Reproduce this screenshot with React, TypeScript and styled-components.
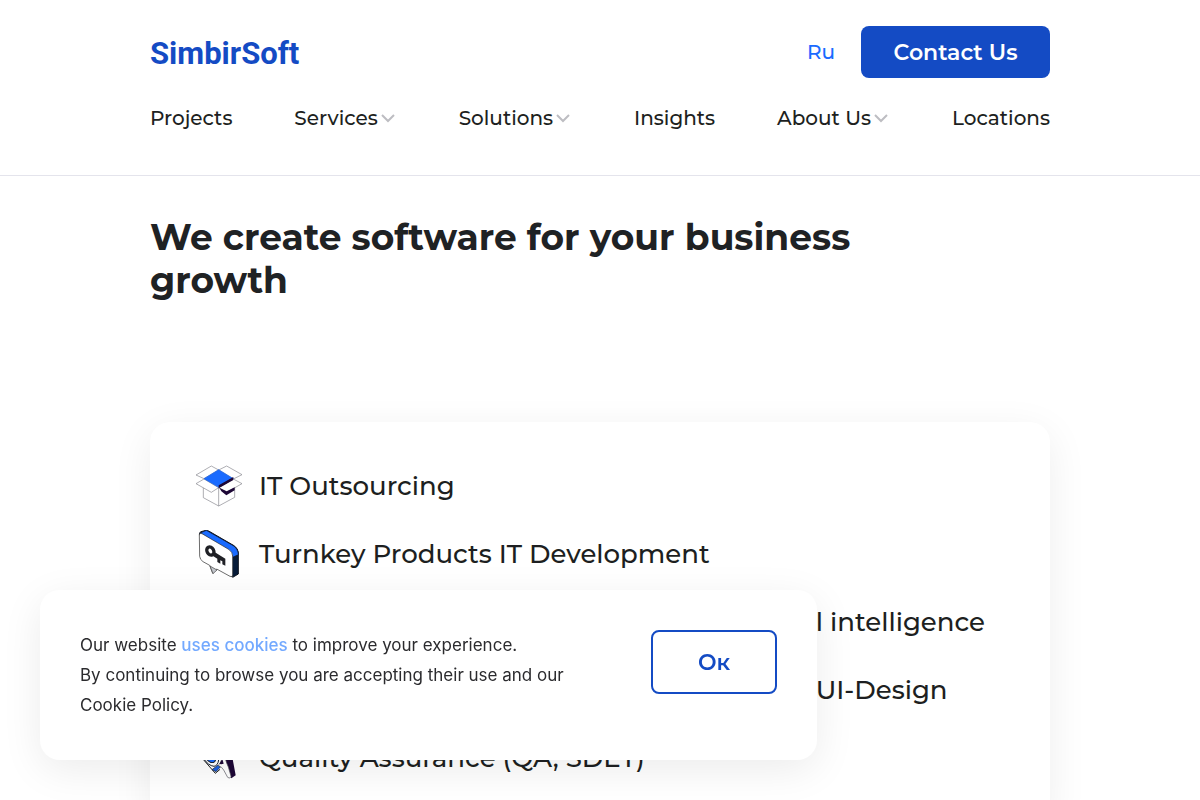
import React from 'react';
import styled, { createGlobalStyle } from 'styled-components';

const GlobalStyle = createGlobalStyle`
  *, *::before, *::after { box-sizing: border-box; }
  body {
    margin: 0;
    background: #fff;
    color: #1d1f21;
    font-family: Montserrat, Inter, "Open Sans", sans-serif;
    font-weight: 500;
  }
  a { color: inherit; text-decoration: none; }
`;

const Header = styled.header`
  padding: 26px 0 40px;
  border-bottom: 1px solid #e4e4ec;
`;

const Container = styled.div`
  width: 75%;
  margin: 0 auto;
`;

const TopBar = styled.div`
  display: flex;
  align-items: center;
  justify-content: space-between;
`;

const Logo = styled.a`
  padding-top: 4px;
  font-family: Roboto, sans-serif;
  font-size: 31px;
  line-height: 48px;
  font-weight: 700;
  color: #144bc4;
`;

const Actions = styled.div`
  display: flex;
  align-items: center;
  gap: 26px;
`;

const Language = styled.a`
  font-size: 20px;
  color: #1a6bff;
`;

const Button = styled.button<{ $outlined?: boolean }>`
  height: ${(p) => (p.$outlined ? 64 : 52)}px;
  min-width: ${(p) => (p.$outlined ? 126 : 189)}px;
  padding: 0 32px;
  border: ${(p) => (p.$outlined ? '2px solid #144bc4' : '0')};
  border-radius: 8px;
  background: ${(p) => (p.$outlined ? '#fff' : '#144bc4')};
  color: ${(p) => (p.$outlined ? '#144bc4' : '#fff')};
  font-family: inherit;
  font-size: 22px;
  font-weight: 600;
  white-space: nowrap;
  cursor: pointer;
`;

const Nav = styled.nav`
  display: flex;
  justify-content: space-between;
  margin-top: 24px;
`;

const NavLink = styled.a`
  display: flex;
  align-items: center;
  gap: 3px;
  font-size: 20px;
  line-height: 33px;
`;

const Title = styled.h1`
  max-width: 760px;
  margin: 40px 0 120px;
  font-size: 36px;
  line-height: 43px;
  font-weight: 700;
  color: #1f2224;
`;

const Card = styled.ul`
  display: flex;
  flex-direction: column;
  gap: 20px;
  margin: 0 0 60px;
  padding: 40px 45px;
  list-style: none;
  border-radius: 20px;
  background: #fff;
  box-shadow: 0 10px 40px rgba(0, 0, 0, 0.07);
`;

const Service = styled.a`
  display: flex;
  align-items: center;
  gap: 16px;
  font-size: 26px;
  line-height: 48px;
  white-space: nowrap;
  svg { flex: none; }
`;

const CookieBanner = styled.aside`
  position: fixed;
  left: 40px;
  bottom: 40px;
  display: flex;
  align-items: flex-start;
  justify-content: space-between;
  width: calc(100% - 80px);
  max-width: 777px;
  padding: 40px;
  border-radius: 20px;
  background: #fff;
  box-shadow: 0 10px 40px rgba(0, 0, 0, 0.08);
`;

const CookieText = styled.p`
  max-width: 510px;
  margin: 0;
  font-family: Inter, Roboto, sans-serif;
  font-size: 17px;
  font-weight: 400;
  line-height: 30px;
  color: #2b2b2e;
  a { color: #73a9ff; font-weight: 500; }
`;

const Chevron = () => (
  <svg width="16" height="16" viewBox="0 0 16 16" fill="none" stroke="#bdbdc2" strokeWidth="2" aria-hidden="true">
    <path d="M1 4l6 6 6-6" />
  </svg>
);

const BoxIcon = () => (
  <svg width="48" height="48" viewBox="15 21 144 144" fill="#fff" stroke="#85858c" strokeWidth="2" strokeLinejoin="round" aria-hidden="true">
    <path d="M40 84v44l46 25 48-26V84L86 58z" />
    <path d="M86 98v55" />
    <path d="M18 60l46-27 22 12-44 26zM86 45l24-12 46 26-26 13z" />
    <path d="M18 86l24-14 44 26-22 14zM86 98l44-26 26 14-46 26z" />
    <path d="M88 98l22 11 24-12v9l-25 15-15-12z" fill="#1d0736" stroke="none" />
    <path d="M42 71l44-27 44 27-44 26z" fill="#1a6bff" stroke="#1a5fe0" />
    <path d="M86 91l44-25v9L86 100z" fill="#1d0736" stroke="none" />
  </svg>
);

const KeyIcon = () => (
  <svg width="48" height="48" viewBox="15 30 144 144" strokeLinejoin="round" aria-hidden="true">
    <path d="M28 43q0-6 5-8l15-4q4 0 8 2l76 44q12 8 13 20v65l-17 10z" fill="#071b38" stroke="#10151f" strokeWidth="3" />
    <path d="M29 40l20-9 81 46q14 9 15 27l-17 8q-3-16-15-22z" fill="#1a6bff" stroke="#10151f" strokeWidth="2" />
    <path d="M28 45q0-8 8-4l80 47q12 8 12 20v57q0 8-8 4l-40-22-12 13-9-24-20-11q-9-6-10-16z" fill="#fff" stroke="#222" strokeWidth="2" />
    <path d="M60 138l21 12-12 11z" fill="#c3c6cc" stroke="#444" strokeWidth="2" />
    <ellipse cx="61" cy="93" rx="10" ry="13" transform="rotate(-28 61 93)" fill="none" stroke="#202126" strokeWidth="10" />
    <path d="M70 94l36 22v21l-9-4v-9l-6-3v10l-9-5v-10l-13-8z" fill="#202126" />
  </svg>
);

const ChipIcon = () => (
  <svg width="48" height="48" viewBox="0 0 48 48" fill="#fff" stroke="#222" strokeLinejoin="round" aria-hidden="true">
    <path d="M6 14l18-10 18 10v18L24 43 6 32z" />
    <path d="M12 16l12-7 12 7-12 7z" fill="#1a6bff" />
    <path d="M24 23v20M6 14l18 9 18-9" />
  </svg>
);

const LayoutIcon = () => (
  <svg width="48" height="48" viewBox="0 0 48 48" fill="#fff" stroke="#222" strokeLinejoin="round" aria-hidden="true">
    <path d="M5 8l38 14v22L5 30z" />
    <path d="M5 8l38 14v6L5 14z" fill="#1a6bff" />
    <path d="M10 21l10 4v7l-10-4zM25 27l13 5M25 32l13 5" />
  </svg>
);

const InspectIcon = () => (
  <svg width="48" height="48" viewBox="15 -48 144 144" strokeLinejoin="round" aria-hidden="true">
    <path d="M34 14l10-38 42-5 24 24-14 38-20 38q-28-22-42-57z" fill="#fff" stroke="none" />
    <path d="M36 24l40 46 14-12" fill="none" stroke="#222" strokeWidth="3" />
    <path d="M41 26q14 21 31 23 12-2 14-20" fill="none" stroke="#17202f" strokeWidth="3" />
    <ellipse cx="61" cy="21" rx="13" ry="19" transform="rotate(-40 61 21)" fill="#1a6bff" stroke="#17202f" strokeWidth="3" />
    <path d="M66 59l18-14 7 6-13 14z" fill="#1a5fe0" stroke="#17202f" strokeWidth="2" />
    <path d="M94 26l10-22 20 2 13 70-13 9z" fill="#1d0736" />
    <path d="M85 46q7-5 11-20l11 3q2 9 8 22l8 28q-1 8-10 3l-12-22q-5-9-16-14z" fill="#fff" stroke="#55555c" strokeWidth="2" />
    <path d="M88 41l9-14 4 14-8 2z" fill="#1d0736" />
  </svg>
);

const navItems = [
  { label: 'Projects' },
  { label: 'Services', menu: true },
  { label: 'Solutions', menu: true },
  { label: 'Insights' },
  { label: 'About Us', menu: true },
  { label: 'Locations' },
];

const services = [
  { label: 'IT Outsourcing', Icon: BoxIcon },
  { label: 'Turnkey Products IT Development', Icon: KeyIcon },
  { label: 'Data Science, Machine Learning & Artificial intelligence', Icon: ChipIcon },
  { label: 'Business Analytics, Data Analytics and UX UI-Design', Icon: LayoutIcon },
  { label: 'Quality Assurance (QA, SDET)', Icon: InspectIcon },
];

export default function App() {
  return (
    <>
      <GlobalStyle />
      <Header>
        <Container>
          <TopBar>
            <Logo href="#">SimbirSoft</Logo>
            <Actions>
              <Language href="#ru">Ru</Language>
              <Button type="button">Contact Us</Button>
            </Actions>
          </TopBar>
          <Nav>
            {navItems.map(({ label, menu }) => (
              <NavLink key={label} href="#">
                {label}
                {menu && <Chevron />}
              </NavLink>
            ))}
          </Nav>
        </Container>
      </Header>
      <Container as="main">
        <Title>We create software for your business growth</Title>
        <Card>
          {services.map(({ label, Icon }) => (
            <li key={label}>
              <Service href="#">
                <Icon />
                {label}
              </Service>
            </li>
          ))}
        </Card>
      </Container>
      <CookieBanner>
        <CookieText>
          Our website <a href="#cookies">uses cookies</a> to improve your experience.
          <br />
          By continuing to browse you are accepting their use and our Cookie Policy.
        </CookieText>
        <Button type="button" $outlined>Ок</Button>
      </CookieBanner>
    </>
  );
}
